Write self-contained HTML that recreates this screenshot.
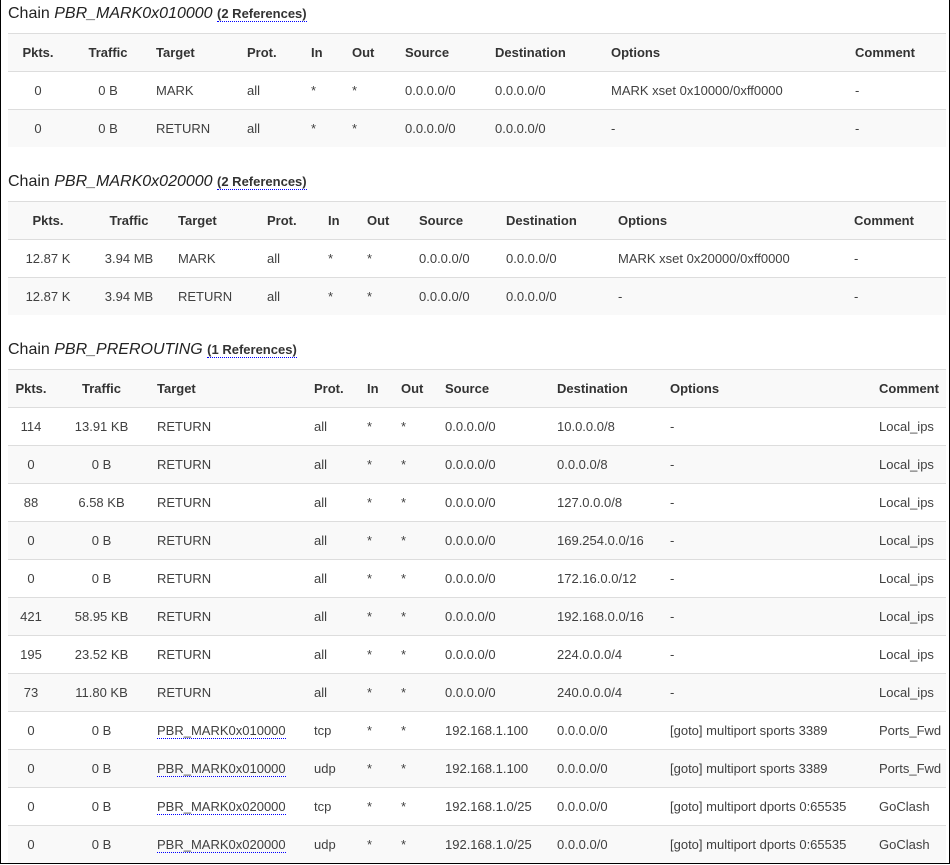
<!DOCTYPE html>
<html><head><meta charset="utf-8"><style>
html,body{margin:0;padding:0;}
body{width:948px;height:863px;border:1px solid #000;border-top:none;background:#fff;font-family:"Liberation Sans",Arial,sans-serif;font-size:13px;color:#404040;position:relative;overflow:hidden;}
.t{position:absolute;left:7px;font-size:16px;color:#222;white-space:nowrap;}
.t i{font-style:italic}
.t span{font-size:13px;font-weight:bold;color:#333;border-bottom:1px dotted #00f;}
.tb{position:absolute;left:7px;width:938px;}
.r{display:grid;height:37px;border-top:1px solid #ddd;align-items:center;background:#fff;}
.r.g{background:#f9f9f9}
.r>div{padding-left:8px;white-space:nowrap;}
.r>div:nth-child(1),.r>div:nth-child(2){padding-left:0;text-align:center}
.h{font-weight:bold;color:#333;background:#f9f9f9}
a{color:#404040;text-decoration:none;border-bottom:1px dotted #00f}
.a .r{grid-template-columns:60px 80px 91px 64px 41px 53px 90px 116px 244px 98px}
.b .r{grid-template-columns:80px 82px 89px 61px 39px 52px 87px 112px 236px 80px}
.c .r{grid-template-columns:46px 95px 157px 53px 34px 44px 112px 113px 209px 75px}
</style></head><body>
<div class="t" style="top:5px">Chain <i>PBR_MARK0x010000</i> <span>(2 References)</span></div>
<div class="tb a" style="top:33px">
<div class="r h"><div>Pkts.</div><div>Traffic</div><div>Target</div><div>Prot.</div><div>In</div><div>Out</div><div>Source</div><div>Destination</div><div>Options</div><div>Comment</div></div>
<div class="r"><div>0</div><div>0 B</div><div>MARK</div><div>all</div><div>*</div><div>*</div><div>0.0.0.0/0</div><div>0.0.0.0/0</div><div>MARK xset 0x10000/0xff0000</div><div>-</div></div>
<div class="r g"><div>0</div><div>0 B</div><div>RETURN</div><div>all</div><div>*</div><div>*</div><div>0.0.0.0/0</div><div>0.0.0.0/0</div><div>-</div><div>-</div></div>
</div>
<div class="t" style="top:173px">Chain <i>PBR_MARK0x020000</i> <span>(2 References)</span></div>
<div class="tb b" style="top:201px">
<div class="r h"><div>Pkts.</div><div>Traffic</div><div>Target</div><div>Prot.</div><div>In</div><div>Out</div><div>Source</div><div>Destination</div><div>Options</div><div>Comment</div></div>
<div class="r"><div>12.87 K</div><div>3.94 MB</div><div>MARK</div><div>all</div><div>*</div><div>*</div><div>0.0.0.0/0</div><div>0.0.0.0/0</div><div>MARK xset 0x20000/0xff0000</div><div>-</div></div>
<div class="r g"><div>12.87 K</div><div>3.94 MB</div><div>RETURN</div><div>all</div><div>*</div><div>*</div><div>0.0.0.0/0</div><div>0.0.0.0/0</div><div>-</div><div>-</div></div>
</div>
<div class="t" style="top:341px">Chain <i>PBR_PREROUTING</i> <span>(1 References)</span></div>
<div class="tb c" style="top:369px">
<div class="r h"><div>Pkts.</div><div>Traffic</div><div>Target</div><div>Prot.</div><div>In</div><div>Out</div><div>Source</div><div>Destination</div><div>Options</div><div>Comment</div></div>
<div class="r"><div>114</div><div>13.91 KB</div><div>RETURN</div><div>all</div><div>*</div><div>*</div><div>0.0.0.0/0</div><div>10.0.0.0/8</div><div>-</div><div>Local_ips</div></div>
<div class="r g"><div>0</div><div>0 B</div><div>RETURN</div><div>all</div><div>*</div><div>*</div><div>0.0.0.0/0</div><div>0.0.0.0/8</div><div>-</div><div>Local_ips</div></div>
<div class="r"><div>88</div><div>6.58 KB</div><div>RETURN</div><div>all</div><div>*</div><div>*</div><div>0.0.0.0/0</div><div>127.0.0.0/8</div><div>-</div><div>Local_ips</div></div>
<div class="r g"><div>0</div><div>0 B</div><div>RETURN</div><div>all</div><div>*</div><div>*</div><div>0.0.0.0/0</div><div>169.254.0.0/16</div><div>-</div><div>Local_ips</div></div>
<div class="r"><div>0</div><div>0 B</div><div>RETURN</div><div>all</div><div>*</div><div>*</div><div>0.0.0.0/0</div><div>172.16.0.0/12</div><div>-</div><div>Local_ips</div></div>
<div class="r g"><div>421</div><div>58.95 KB</div><div>RETURN</div><div>all</div><div>*</div><div>*</div><div>0.0.0.0/0</div><div>192.168.0.0/16</div><div>-</div><div>Local_ips</div></div>
<div class="r"><div>195</div><div>23.52 KB</div><div>RETURN</div><div>all</div><div>*</div><div>*</div><div>0.0.0.0/0</div><div>224.0.0.0/4</div><div>-</div><div>Local_ips</div></div>
<div class="r g"><div>73</div><div>11.80 KB</div><div>RETURN</div><div>all</div><div>*</div><div>*</div><div>0.0.0.0/0</div><div>240.0.0.0/4</div><div>-</div><div>Local_ips</div></div>
<div class="r"><div>0</div><div>0 B</div><div><a>PBR_MARK0x010000</a></div><div>tcp</div><div>*</div><div>*</div><div>192.168.1.100</div><div>0.0.0.0/0</div><div>[goto] multiport sports 3389</div><div>Ports_Fwd</div></div>
<div class="r g"><div>0</div><div>0 B</div><div><a>PBR_MARK0x010000</a></div><div>udp</div><div>*</div><div>*</div><div>192.168.1.100</div><div>0.0.0.0/0</div><div>[goto] multiport sports 3389</div><div>Ports_Fwd</div></div>
<div class="r"><div>0</div><div>0 B</div><div><a>PBR_MARK0x020000</a></div><div>tcp</div><div>*</div><div>*</div><div>192.168.1.0/25</div><div>0.0.0.0/0</div><div>[goto] multiport dports 0:65535</div><div>GoClash</div></div>
<div class="r g"><div>0</div><div>0 B</div><div><a>PBR_MARK0x020000</a></div><div>udp</div><div>*</div><div>*</div><div>192.168.1.0/25</div><div>0.0.0.0/0</div><div>[goto] multiport dports 0:65535</div><div>GoClash</div></div>
</div>
</body></html>
